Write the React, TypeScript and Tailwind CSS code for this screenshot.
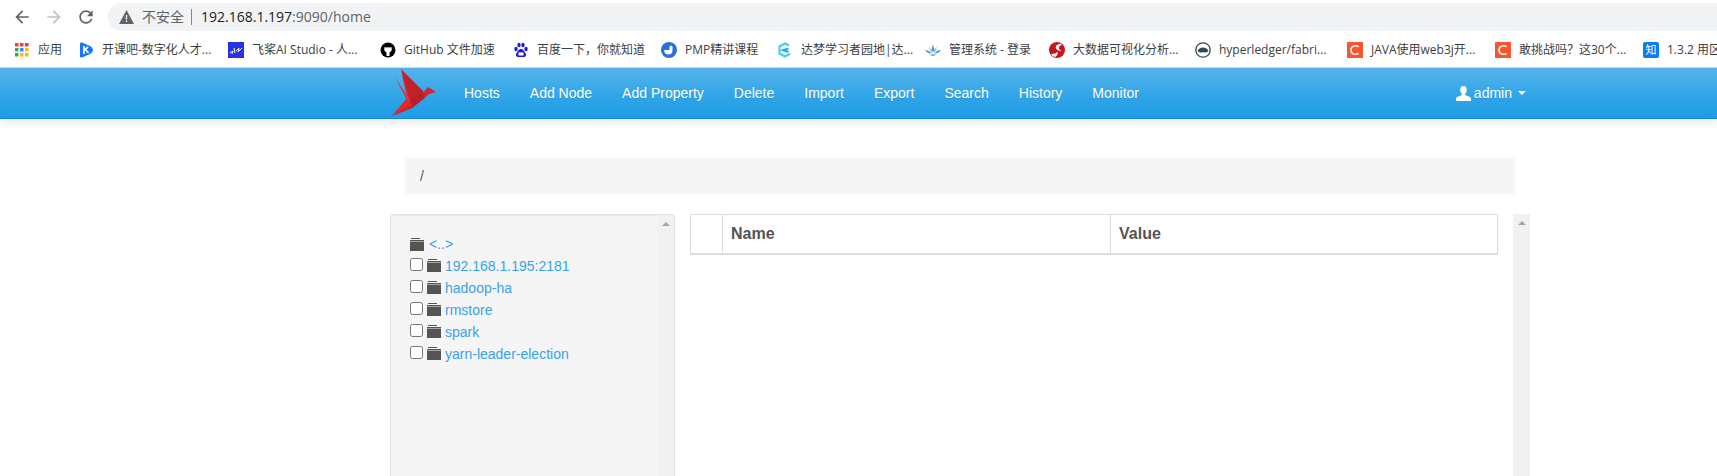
const uiFont = '[font-family:"Open_Sans","Noto_Sans_CJK_SC",sans-serif]';

const AppsIcon = () => (
    <svg width="16" height="16" viewBox="0 0 16 16">
        <rect x="1" y="1" width="3.5" height="3.5" fill="#ea4335" />
        <rect x="6" y="1" width="3.5" height="3.5" fill="#ea4335" />
        <rect x="11" y="1" width="3.5" height="3.5" fill="#ea4335" />
        <rect x="1" y="6" width="3.5" height="3.5" fill="#34a853" />
        <rect x="6" y="6" width="3.5" height="3.5" fill="#4285f4" />
        <rect x="11" y="6" width="3.5" height="3.5" fill="#fbbc05" />
        <rect x="1" y="11" width="3.5" height="3.5" fill="#34a853" />
        <rect x="6" y="11" width="3.5" height="3.5" fill="#fbbc05" />
        <rect x="11" y="11" width="3.5" height="3.5" fill="#fbbc05" />
    </svg>
);

const KaikebaIcon = () => (
    <svg width="16" height="16" viewBox="0 0 16 16">
        <path d="M2 1.5 Q2 0 4 .6 L12 4 Q15 5.5 15 8 Q15 10.5 12 12 L4 15.4 Q2 16 2 14.5Z" fill="#1677ff" />
        <path d="M6 4v8M6 8.5 10 5M7.5 7.5 10.5 11" stroke="#fff" strokeWidth="1.7" fill="none" />
    </svg>
);

const PaddleIcon = () => (
    <svg width="16" height="16" viewBox="0 0 16 16">
        <rect width="16" height="16" fill="#2932e1" />
        <path d="M2 11 5 9 4 12M6 6 7 11M8 9 11 6 10 10M11 9 14 6" stroke="#fff" strokeWidth="1" fill="none" />
    </svg>
);

const GithubIcon = () => (
    <svg width="16" height="16" viewBox="0 0 16 16">
        <circle cx="8" cy="8" r="7.5" fill="#000" />
        <path d="M4.5 5 6 5.6Q8 5 10 5.6L11.5 5 11.8 8Q11 10 9.5 10.4L9.5 14H6.5L6.5 10.4Q5 10 4.2 8Z" fill="#fff" />
    </svg>
);

const BaiduIcon = () => (
    <svg width="16" height="16" viewBox="0 0 16 16" fill="#2319dc">
        <ellipse cx="3" cy="7" rx="1.7" ry="2.2" />
        <ellipse cx="6" cy="3" rx="1.7" ry="2.3" />
        <ellipse cx="10" cy="3" rx="1.7" ry="2.3" />
        <ellipse cx="13" cy="7" rx="1.7" ry="2.2" />
        <path d="M8 7C5.5 7 5 9.5 3.5 11 2 13 3.5 15.5 6 15H10C12.5 15.5 14 13 12.5 11 11 9.5 10.5 7 8 7Z" />
        <rect x="5.5" y="10.5" width="5" height="3" fill="#fff" />
    </svg>
);

const PmpIcon = () => (
    <svg width="16" height="16" viewBox="0 0 16 16">
        <circle cx="8" cy="8" r="8" fill="#2a6fdb" />
        <path d="M3 8H8.5V5Q8.5 3.5 10 3.5 11.5 3.5 11.5 5V8Q11.5 12.5 7.5 12.5 3.5 12.5 3 8Z" fill="#fff" />
    </svg>
);

const DamengIcon = () => (
    <svg width="16" height="16" viewBox="0 0 16 16" fill="none">
        <path d="M12 3.500 8 1.500 2.500 4.500V11.500L8 14.500 13 11.800" stroke="#3fd0f0" strokeWidth="2.2" />
        <path d="M11.500 6.500 6 8.200 11.500 10" stroke="#2aa8e8" strokeWidth="2" />
    </svg>
);

const LotusIcon = () => (
    <svg width="16" height="16" viewBox="0 0 16 16" fill="#4a8fc9">
        <path d="M8 2 9.3 7.5 8 10.5 6.7 7.5Z" />
        <path d="M3.5 4 7 9 6.8 11Z" />
        <path d="M12.5 4 9 9 9.2 11Z" />
        <path d="M0 8Q4 8 6.5 11.5 2.5 11.5 0 8Z" />
        <path d="M16 8Q12 8 9.5 11.5 13.5 11.5 16 8Z" />
        <path d="M4 12.5H12L8 14Z" />
    </svg>
);

const RedSIcon = () => (
    <svg width="16" height="16" viewBox="0 0 16 16">
        <circle cx="8" cy="8" r="8" fill="#c8161d" />
        <path d="M11.5 1.5Q5.5 3 7 6.5 8.5 9 13 9 9 7.5 10 5 10.5 3.5 13 3Z" fill="#fff" />
        <path d="M2 12Q8 12 8 9.5 10 12.5 6 15 3 14.5 2 12Z" fill="#fff" />
    </svg>
);

const FabricIcon = () => (
    <svg width="16" height="16" viewBox="0 0 16 16">
        <circle cx="8" cy="8" r="7.2" fill="#fff" stroke="#2f4a57" strokeWidth="1.3" />
        <path d="M2.5 9Q4 5.5 8 5.5 12 5.5 13.5 9 10.5 11.5 8 10 5 11.5 2.5 9Z" fill="#2f4a57" />
    </svg>
);

const CsdnIcon = () => (
    <svg width="16" height="16" viewBox="0 0 16 16">
        <rect width="16" height="16" fill="#fc5531" />
        <path d="M11.6 4.6Q10.3 3.6 8.6 3.7 4 4 4 8 4 12.2 8.6 12.3 10.3 12.3 11.6 11.4" stroke="#fff" strokeWidth="1.6" fill="none" />
    </svg>
);

const ZhihuIcon = () => (
    <div className="flex h-4 w-4 items-center justify-center rounded-[2px] bg-[#0a7cf5] text-[11px] leading-none text-white">知</div>
);

const bookmarks = [
    { icon: <AppsIcon />, label: '应用', width: 'w-[64px]' },
    { icon: <KaikebaIcon />, label: '开课吧-数字化人才...', width: 'w-[150px]' },
    { icon: <PaddleIcon />, label: '飞桨AI Studio - 人...', width: 'w-[152px]' },
    { icon: <GithubIcon />, label: 'GitHub 文件加速', width: 'w-[133px]' },
    { icon: <BaiduIcon />, label: '百度一下，你就知道', width: 'w-[148px]' },
    { icon: <PmpIcon />, label: 'PMP精讲课程', width: 'w-[116px]' },
    { icon: <DamengIcon />, label: '达梦学习者园地|达...', width: 'w-[148px]' },
    { icon: <LotusIcon />, label: '管理系统 - 登录', width: 'w-[124px]' },
    { icon: <RedSIcon />, label: '大数据可视化分析...', width: 'w-[146px]' },
    { icon: <FabricIcon />, label: 'hyperledger/fabri...', width: 'w-[152px]' },
    { icon: <CsdnIcon />, label: 'JAVA使用web3j开...', width: 'w-[148px]' },
    { icon: <CsdnIcon />, label: '敢挑战吗？这30个...', width: 'w-[148px]' },
    { icon: <ZhihuIcon />, label: '1.3.2 用区', width: 'w-[80px]' },
];

const navItems = ['Hosts', 'Add Node', 'Add Property', 'Delete', 'Import', 'Export', 'Search', 'History', 'Monitor'];
const folders = ['192.168.1.195:2181', 'hadoop-ha', 'rmstore', 'spark', 'yarn-leader-election'];

const Logo = () => (
    <svg width="46" height="50" viewBox="0 0 46 50" className="shrink-0">
        <path d="M3 9 15 28 18 38Z" fill="#ee2326" />
        <path d="M9 1 32 24 20 40 14 24Z" fill="#c3202b" />
        <path d="M9 1 14 24 20 38Z" fill="#e8232a" />
        <path d="M32 24 36 19 44 24 37 26 31 31Z" fill="#d9232b" />
        <path d="M31 24 33 30 20 40 0 48 18 33Z" fill="#b91f2a" />
        <path d="M0 48 15 30 20 38Z" fill="#ee2326" />
    </svg>
);

const FolderIcon = () => (
    <svg width="14" height="13" viewBox="0 0 14 13" className="shrink-0" fill="#555">
        <rect x="1" y="0" width="9" height="1" />
        <rect x="0" y="2" width="14" height="1" />
        <rect x="0" y="3.5" width="14" height="9.5" />
    </svg>
);

const ScrollTrack = ({ width }: { width: string }) => (
    <div className={`flex shrink-0 justify-center bg-[#f1f1f1] pt-[7px] ${width}`}>
        <div className="h-0 w-0 border-x-[4px] border-b-[4px] border-x-transparent border-b-[#a3a3a3]" />
    </div>
);

const App = () => {
    return (
        <div className="flex h-screen flex-col overflow-hidden bg-white font-['Liberation_Sans',sans-serif] text-sm text-[#555]">
            {/* browser chrome */}
            <div className="flex h-[33px] shrink-0 items-center pl-[12px] pt-[1px]">
                <svg width="20" height="20" viewBox="0 0 24 24" fill="#5f6368"><path d="M20 11H7.83l5.59-5.59L12 4l-8 8 8 8 1.41-1.41L7.83 13H20v-2z" /></svg>
                <svg width="20" height="20" viewBox="0 0 24 24" fill="#bdc1c6" className="ml-[12px]"><path d="M4 11h12.17l-5.59-5.59L12 4l8 8-8 8-1.41-1.41L16.170 13H4v-2z" /></svg>
                <svg width="20" height="20" viewBox="0 0 24 24" fill="#5f6368" className="ml-[12px]"><path d="M17.65 6.35C16.2 4.9 14.21 4 12 4c-4.42 0-7.99 3.58-7.99 8s3.57 8 7.99 8c3.73 0 6.84-2.55 7.73-6h-2.08c-.82 2.33-3.04 4-5.65 4-3.31 0-6-2.69-6-6s2.69-6 6-6c1.66 0 3.14.69 4.22 1.78L13 11h7V4l-2.35 2.35z" /></svg>
                <div className={`ml-[12px] flex h-[28px] flex-1 items-center rounded-l-full bg-[#f1f3f4] pl-[11px] text-sm ${uiFont}`}>
                    <svg width="15" height="14" viewBox="0 0 15 14" fill="#5f6368"><path d="M7.5 0 15 14H0Z" /><rect x="6.8" y="5" width="1.4" height="4.5" fill="#f1f3f4" /><rect x="6.8" y="10.5" width="1.4" height="1.5" fill="#f1f3f4" /></svg>
                    <span className="ml-[8px] text-[#5f6368]">不安全</span>
                    <span className="ml-[7px] h-[16px] w-px bg-[#80868b]" />
                    <span className="ml-[9px] text-[#202124]">192.168.1.197<span className="text-[#5f6368]">:9090/home</span></span>
                </div>
            </div>
            <div className={`flex h-[35px] shrink-0 items-center overflow-hidden border-b border-[#d9dbdd] pb-[1px] pl-[14px] text-xs text-[#3c4043] ${uiFont}`}>
                {bookmarks.map((b, i) => (
                    <div key={i} className={`flex shrink-0 items-center gap-[8px] whitespace-nowrap ${b.width}`}>
                        {b.icon}
                        <span>{b.label}</span>
                    </div>
                ))}
            </div>

            {/* navbar */}
            <div className="h-[51px] shrink-0 border-b border-[#178acc] bg-[linear-gradient(to_bottom,#54b4eb_0%,#2fa4e7_60%,#1d9ce5_100%)] shadow-[0_3px_9px_rgba(0,0,0,0.1)]">
                <div className="ml-[375px] flex h-full w-[1170px] items-center pl-[17px] pr-[19px] text-white [text-shadow:0_1px_0_rgba(0,0,0,0.1)]">
                    <Logo />
                    <div className="ml-[11px] flex">
                        {navItems.map((item) => (
                            <a key={item} className="px-[15px]">{item}</a>
                        ))}
                    </div>
                    <div className="ml-auto flex items-center">
                        <svg width="15" height="15" viewBox="0 0 15 15" fill="#fff"><path d="M7.5 0C5.4 0 4.2 1.6 4.2 3.8c0 1.8.9 3.4 1.7 4.1v1.2C3.5 10 .4 10.900 0 12.500V15h15v-2.500c-.4-1.600-3.500-2.500-5.900-3.400V7.900c.8-.7 1.700-2.300 1.700-4.100C10.800 1.600 9.600 0 7.500 0z" /></svg>
                        <span className="ml-[3px]">admin</span>
                        <span className="ml-[6px] h-0 w-0 border-x-[4px] border-t-[4px] border-x-transparent border-t-white" />
                    </div>
                </div>
            </div>

            {/* content */}
            <div className="ml-[375px] flex min-h-0 w-[1170px] flex-1 flex-col px-[15px]">
                <div className="mx-[15px] mt-[39px] h-[36px] shrink-0 rounded bg-[#f5f5f5] px-[15px] py-[8px] text-[#555]">/</div>
                <div className="mt-[20px] flex min-h-0 flex-1 gap-[15px] pr-[15px]">
                    <div className="flex w-[285px] shrink-0 overflow-hidden rounded-t border border-b-0 border-[#e3e3e3] bg-[#f5f5f5] shadow-[inset_0_1px_1px_rgba(0,0,0,0.05)]">
                        <div className="flex-1 pl-[19px] pt-[18px] text-[#38a3e8]">
                            <div className="flex h-[22px] items-center">
                                <FolderIcon />
                                <a className="ml-[5px]">&lt;..&gt;</a>
                            </div>
                            {folders.map((name) => (
                                <div key={name} className="flex h-[22px] items-center">
                                    <input type="checkbox" className="m-0 mb-[3px] h-[13px] w-[13px] appearance-none rounded-[2.5px] border border-[#767676] bg-white" />
                                    <span className="mb-[1px] ml-[4px]"><FolderIcon /></span>
                                    <a className="ml-[4px]">{name}</a>
                                </div>
                            ))}
                        </div>
                        <ScrollTrack width="w-[17px]" />
                    </div>
                    <div className="w-[808px] shrink-0">
                        <table className="w-full table-fixed border border-[#ddd]">
                            <thead>
                                <tr className="h-[39px] border-b-2 border-[#ddd] text-left text-base font-bold text-[#555]">
                                    <th className="w-[32px] border-r border-[#ddd]" />
                                    <th className="w-[388px] border-r border-[#ddd] pl-[8px]">Name</th>
                                    <th className="pl-[8px]">Value</th>
                                </tr>
                            </thead>
                        </table>
                    </div>
                    <ScrollTrack width="w-[17px]" />
                </div>
            </div>
        </div>
    );
};

export default App;
